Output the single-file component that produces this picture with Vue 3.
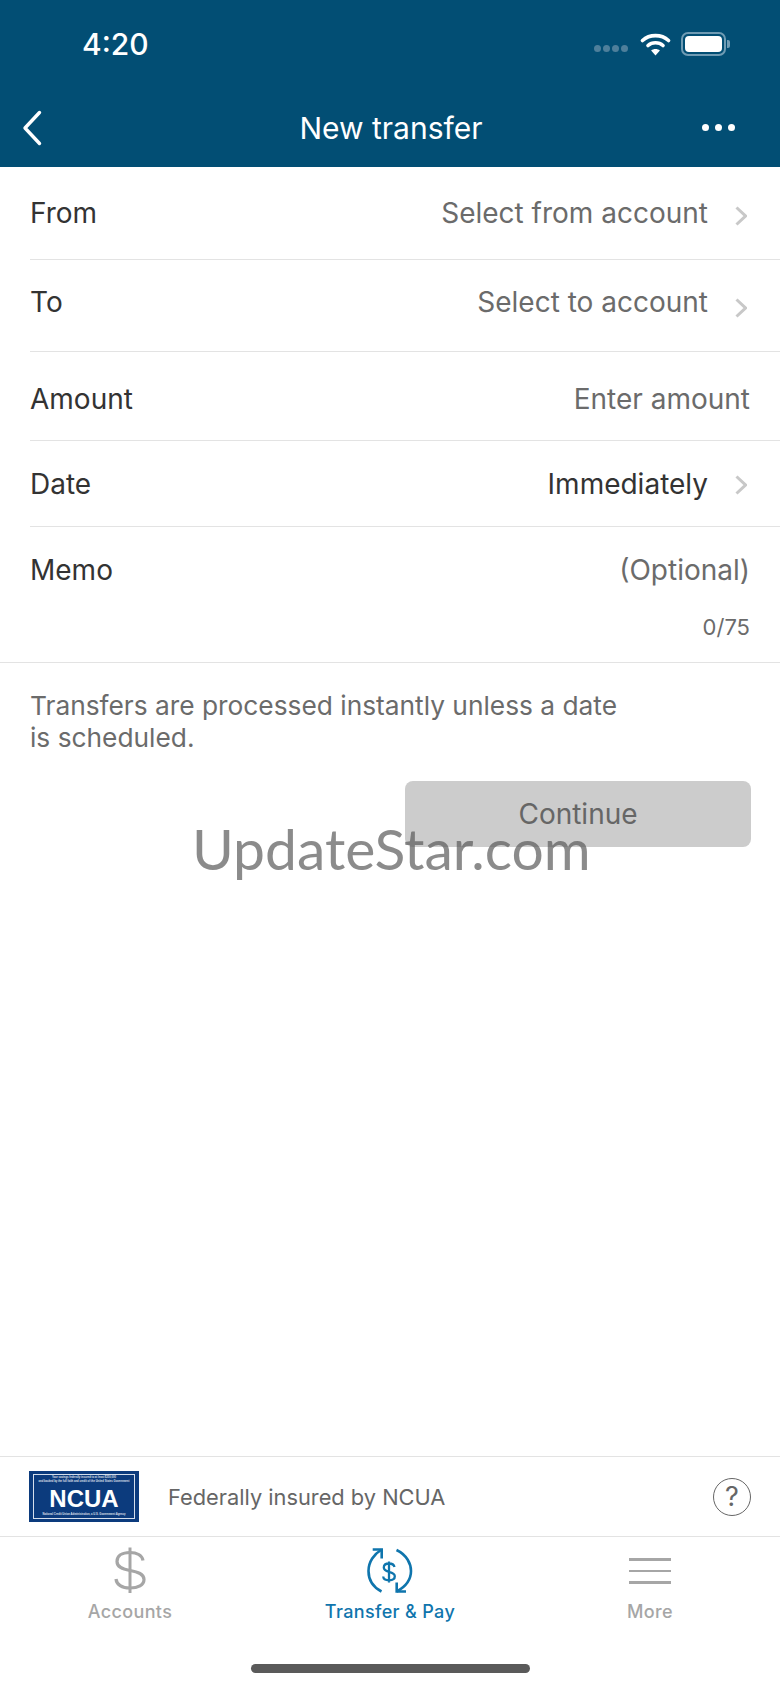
<template>
  <div class="screen">
    <header class="top">
      <div class="status">
        <span class="time">4:20</span>
        <div class="status-icons">
          <div class="signal"><i></i><i></i><i></i><i></i></div>
          <svg class="wifi" width="31" height="24" viewBox="0 0 31 24">
            <path d="M2.5 8.5C9.5 2 21.5 2 28.5 8.5" fill="none" stroke="#fff" stroke-width="3.6" stroke-linecap="round" />
            <path d="M8 13.5C12 9.8 19 9.8 23 13.5" fill="none" stroke="#fff" stroke-width="3.6" stroke-linecap="round" />
            <path d="M15.5 23.5L11.1 18.4C13.5 16.4 17.5 16.4 19.9 18.4Z" fill="#fff" />
          </svg>
          <div class="battery"><div class="battery-fill"></div></div>
          <div class="battery-cap"></div>
        </div>
      </div>
      <div class="nav">
        <svg class="back" width="22" height="36" viewBox="0 0 22 36">
          <path d="M18.5 2.5L4 18L18.5 33.5" fill="none" stroke="#fff" stroke-width="3.4" stroke-linecap="round" stroke-linejoin="round" />
        </svg>
        <span class="title">New transfer</span>
        <div class="dots"><i></i><i></i><i></i></div>
      </div>
    </header>

    <main class="form">
      <div v-for="row in rows" :key="row.label" class="row" :class="row.cls">
        <span class="label">{{ row.label }}</span>
        <span class="value" :class="{ dark: row.dark }">{{ row.value }}</span>
        <svg v-if="row.chevron" class="chevron" width="12" height="20" viewBox="0 0 12 20">
          <path d="M1.5 1.5L10.5 10L1.5 18.5" fill="none" stroke="#c8c8c8" stroke-width="3" />
        </svg>
      </div>
      <div class="memo">
        <div class="memo-line">
          <span class="label">Memo</span>
          <span class="value">(Optional)</span>
        </div>
        <div class="count">0/75</div>
      </div>
      <p class="note">Transfers are processed instantly unless a date<br />is scheduled.</p>
      <div class="actions">
        <button class="continue" disabled>Continue</button>
      </div>
      <div class="watermark">UpdateStar.com</div>
    </main>

    <div class="insured">
      <div class="ncua">
        <div class="ncua-inner">
          <div class="ncua-fine">Your savings federally insured to at least $250,000<br />and backed by the full faith and credit of the United States Government</div>
          <div class="ncua-name">NCUA</div>
          <div class="ncua-fine">National Credit Union Administration, a U.S. Government Agency</div>
        </div>
      </div>
      <span class="insured-text">Federally insured by NCUA</span>
      <div class="help">?</div>
    </div>

    <nav class="tabs">
      <div class="tab">
        <svg width="36" height="48" viewBox="0 0 36 48">
          <path d="M31 14.5C30 9.5 25 6.5 18 6.5C10 6.5 5 10 5 15.5C5 21 10 23 18 24.5C26 26 32 28 32 33.5C32 39 26 42 18 42C10 42 4.5 38.5 4 33" fill="none" stroke="#a6a6a6" stroke-width="3.2" />
          <path d="M18 1.5V47" stroke="#a6a6a6" stroke-width="3" />
        </svg>
        <span>Accounts</span>
      </div>
      <div class="tab active">
        <svg width="46" height="48" viewBox="0 0 46 48">
          <path d="M14.5 45.5C4 40 1.5 31 1.5 25C1.5 16 7 8 14.7 3.5" fill="none" stroke="#0f75ad" stroke-width="2.6" />
          <path d="M5.7 3.5H14.7V12.5" fill="none" stroke="#0f75ad" stroke-width="2.6" />
          <path d="M29.5 4C40 9 44 18 44 25C44 34 38 41 29.7 45.5" fill="none" stroke="#0f75ad" stroke-width="2.6" />
          <path d="M39 45.5H29.7V36.5" fill="none" stroke="#0f75ad" stroke-width="2.6" />
          <path d="M27.5 21C27 18.8 25 17.5 22 17.5C18.8 17.5 16.8 19.2 16.8 21.5C16.8 24 18.8 25 22 25.8C25.2 26.6 27.8 27.6 27.8 30.3C27.8 32.8 25.3 34.3 22 34.3C18.8 34.3 16.4 32.8 16.2 30.5M22 15.5V36.5" fill="none" stroke="#0f75ad" stroke-width="2.3" />
        </svg>
        <span>Transfer &amp; Pay</span>
      </div>
      <div class="tab">
        <div class="menu"><i></i><i></i><i></i></div>
        <span>More</span>
      </div>
    </nav>

    <div class="home"><div class="home-bar"></div></div>
  </div>
</template>

<script setup>
const rows = [
  { label: 'From', value: 'Select from account', chevron: true, cls: 'r-from' },
  { label: 'To', value: 'Select to account', chevron: true, cls: 'r-to' },
  { label: 'Amount', value: 'Enter amount', cls: 'r-amount' },
  { label: 'Date', value: 'Immediately', chevron: true, dark: true, cls: 'r-date' },
];
</script>

<style>
html,
body {
  margin: 0;
  background: #fff;
}
</style>

<style scoped>
.screen {
  width: 780px;
  height: 1688px;
  display: flex;
  flex-direction: column;
  background: #fff;
  overflow: hidden;
  font-family: Inter, "Liberation Sans", sans-serif;
  color: #333;
}

.top {
  height: 167px;
  flex: none;
  background: #024e74;
  color: #fff;
}
.status {
  height: 88px;
  display: flex;
  align-items: center;
  justify-content: space-between;
  padding: 0 50px 0 82px;
  box-sizing: border-box;
}
.time {
  font-size: 30px;
  font-weight: 500;
}
.status-icons {
  display: flex;
  align-items: center;
}
.signal {
  display: flex;
  gap: 2px;
  margin: 9px 12px 0 0;
}
.signal i {
  width: 7px;
  height: 7px;
  border-radius: 50%;
  background: #4e7f9b;
}
.wifi {
  margin-right: 10px;
}
.battery {
  width: 45px;
  height: 24px;
  padding: 2px;
  border: 2px solid #6f9bb3;
  border-radius: 7px;
  box-sizing: border-box;
}
.battery-fill {
  height: 100%;
  background: #fff;
  border-radius: 4px;
}
.battery-cap {
  width: 3px;
  height: 8px;
  margin-left: 1px;
  background: #6f9bb3;
  border-radius: 0 2px 2px 0;
}
.nav {
  height: 79px;
  padding: 0 45px;
  display: grid;
  grid-template-columns: 1fr auto 1fr;
  align-items: center;
}
.back {
  margin-left: -24px;
}
.title {
  font-size: 30px;
  white-space: nowrap;
  padding-left: 2px;
}
.dots {
  display: flex;
  gap: 6px;
  justify-self: end;
}
.dots i {
  width: 7px;
  height: 7px;
  border-radius: 50%;
  background: #fff;
}

.form {
  flex: 1;
  position: relative;
  padding-left: 30px;
}
.row {
  display: flex;
  align-items: center;
  padding-right: 33px;
  border-bottom: 1.5px solid #e3e3e3;
  box-sizing: border-box;
}
.r-from {
  height: 93px;
}
.r-from .chevron {
  margin-top: 6px;
}
.r-to {
  height: 92px;
  padding-bottom: 7px;
}
.r-to .chevron {
  margin-top: 11px;
}
.r-amount {
  height: 89px;
  padding-top: 5px;
  padding-right: 30px;
}
.r-date {
  height: 86px;
}
.r-date .chevron {
  margin-top: 2px;
}
.label {
  font-size: 28px;
  color: #333;
}
.value {
  margin-left: auto;
  font-size: 28px;
  color: #6b6b6b;
}
.value.dark {
  color: #333;
}
.chevron {
  margin-left: 27px;
  flex: none;
}
.memo {
  height: 136px;
  box-sizing: border-box;
  padding: 26px 30px 0 30px;
  margin-left: -30px;
  border-bottom: 1.5px solid #e3e3e3;
}
.memo-line {
  display: flex;
}
.count {
  margin-top: 27px;
  text-align: right;
  font-size: 22px;
  color: #6b6b6b;
}
.note {
  margin: 27px 30px 0 0;
  font-size: 26.3px;
  line-height: 32px;
  color: #6b6b6b;
}
.actions {
  display: flex;
  justify-content: flex-end;
  padding: 27px 29px 0 0;
}
.continue {
  width: 346px;
  height: 66px;
  border: none;
  border-radius: 8px;
  background: #cccccc;
  color: #666;
  font: 28px Inter, "Liberation Sans", sans-serif;
}
.watermark {
  position: absolute;
  left: 192px;
  top: 643px;
  font-family: Lato, "Open Sans", sans-serif;
  font-size: 57px;
  line-height: 76px;
  white-space: nowrap;
  color: rgba(90, 90, 90, 0.7);
}

.insured {
  height: 81px;
  flex: none;
  display: flex;
  align-items: center;
  box-sizing: border-box;
  padding: 0 29px;
  border-top: 1.5px solid #e3e3e3;
  border-bottom: 1.5px solid #e3e3e3;
}
.ncua {
  width: 110px;
  height: 51px;
  flex: none;
  box-sizing: border-box;
  padding: 3px 4px;
  background: #0c3b7d;
}
.ncua-inner {
  height: 100%;
  box-sizing: border-box;
  border: 1px solid #d5deeb;
  display: flex;
  flex-direction: column;
  align-items: center;
  justify-content: space-between;
  overflow: hidden;
  color: #fff;
  font-family: "Liberation Sans", sans-serif;
}
.ncua-fine {
  font-size: 2.7px;
  line-height: 4px;
  font-weight: 700;
  text-align: center;
  white-space: nowrap;
  padding: 1px 0;
  opacity: 0.85;
}
.ncua-name {
  font-size: 24px;
  line-height: 20px;
  font-weight: 700;
  margin-top: 1px;
}
.insured-text {
  margin-left: 29px;
  font-size: 21.8px;
  color: #666;
}
.help {
  margin-left: auto;
  width: 38px;
  height: 38px;
  box-sizing: border-box;
  border: 1.5px solid #666;
  border-radius: 50%;
  display: flex;
  align-items: center;
  justify-content: center;
  font-size: 27px;
  color: #666;
}

.tabs {
  height: 95px;
  flex: none;
  display: flex;
  padding: 9px 0 0;
  box-sizing: border-box;
}
.tab {
  width: 260px;
  display: flex;
  flex-direction: column;
  align-items: center;
  color: #a6a6a6;
  font-size: 18px;
  font-weight: 500;
  letter-spacing: 0.35px;
}
.tab svg {
  height: 48px;
  flex: none;
}
.tab span {
  margin-top: 7px;
}
.tab.active {
  color: #0f75ad;
}
.menu {
  height: 48px;
  width: 42px;
  padding-top: 12px;
  box-sizing: border-box;
  display: flex;
  flex-direction: column;
  gap: 9.2px;
}
.menu i {
  height: 2.5px;
  background: #a6a6a6;
}

.home {
  height: 56px;
  flex: none;
  display: flex;
  justify-content: center;
  padding-top: 32px;
  box-sizing: border-box;
}
.home-bar {
  width: 279px;
  height: 9px;
  border-radius: 5px;
  background: #5a5a5a;
}
</style>
